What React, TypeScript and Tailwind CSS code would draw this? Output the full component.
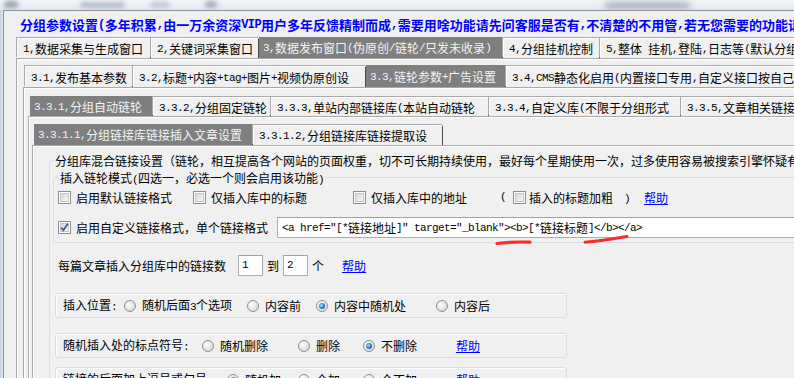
import React from "react";

const CJK_RE = /[\u2E80-\u9FFF\uF900-\uFAFF\uFF00-\uFFEF\u3000-\u303F]/;

function M({ t, b }: { t: string; b?: boolean }) {
  const runs: { s: string; c: boolean }[] = [];
  for (const ch of t) {
    const c = CJK_RE.test(ch);
    const last = runs[runs.length - 1];
    if (last && last.c === c) last.s += ch;
    else runs.push({ s: ch, c });
  }
  return (
    <>
      {runs.map((r, i) =>
        r.c ? (
          <span
            key={i}
            className={
              b
                ? "font-['Noto_Sans_CJK_SC',sans-serif] text-[13px] font-bold"
                : "font-['Noto_Sans_CJK_SC',sans-serif] text-[12px]"
            }
          >
            {r.s}
          </span>
        ) : (
          <span
            key={i}
            className={
              b
                ? "font-['Liberation_Mono',monospace] text-[12px] font-bold tracking-[-0.6px] whitespace-pre"
                : "font-['Liberation_Mono',monospace] text-[11px] tracking-[-0.6px] whitespace-pre"
            }
          >
            {r.s}
          </span>
        )
      )}
    </>
  );
}

function Check({ on }: { on?: boolean }) {
  return (
    <span className="relative flex w-[13px] h-[13px] shrink-0 items-center justify-center border border-[#8e8f8f] bg-white">
      <span className="w-[9px] h-[9px] border border-[#c4c6c9] bg-gradient-to-br from-[#d6d7d9] to-[#f7f7f7]" />
      {on && (
        <svg className="absolute left-0 top-0" width="11" height="11" viewBox="0 0 11 11">
          <path d="M2.2 5.4 L4.4 8.3 L8.8 1.8" fill="none" stroke="#3b5797" strokeWidth="1.7" />
        </svg>
      )}
    </span>
  );
}

function Radio({ on }: { on?: boolean }) {
  return (
    <span className="flex w-[12px] h-[12px] shrink-0 items-center justify-center rounded-full border border-[#8e8f8f] bg-[radial-gradient(circle_at_35%_35%,#ffffff,#cfcfcf)]">
      {on && (
        <span className="w-[6px] h-[6px] rounded-full bg-[radial-gradient(circle_at_40%_40%,#b6e6ff,#1d72c2_55%,#0b3c78)]" />
      )}
    </span>
  );
}

function Help() {
  return (
    <span className="text-[#0000ff] underline decoration-[#0000ff]">
      <M t="帮助" />
    </span>
  );
}

type TabDef = { t: string; w: string; sel?: boolean };

function TabRow({ tabs, h }: { tabs: TabDef[]; h: string }) {
  return (
    <div className={"flex items-end ml-[2px] " + h}>
      {tabs.map((tb, i) =>
        tb.sel ? (
          <div
            key={i}
            className={
              "flex items-center h-full pl-[4px] pt-[1px] bg-[#7f7f7f] text-[#f4f4f4] border-r border-r-[#404040] whitespace-nowrap overflow-hidden shrink-0 " +
              tb.w
            }
          >
            <M t={tb.t} />
          </div>
        ) : (
          <div
            key={i}
            className={
              "flex items-center h-[calc(100%-1px)] pl-[5px] pt-[1px] bg-[#f0f0f0] text-black border-t border-l border-white border-r border-r-[#4a4a4a] shadow-[-1px_-1px_0_#a9a9a9] whitespace-nowrap overflow-hidden shrink-0 " +
              tb.w
            }
          >
            <M t={tb.t} />
          </div>
        )
      )}
    </div>
  );
}

const row1: TabDef[] = [
  { t: "1,数据采集与生成窗口", w: "w-[134px]" },
  { t: "2,关键词采集窗口", w: "w-[108px]" },
  { t: "3,数据发布窗口(伪原创/链轮/只发未收录)", w: "w-[244px]", sel: true },
  { t: "4,分组挂机控制", w: "w-[97px]" },
  { t: "5,整体 挂机,登陆,日志等(默认分组挂机设置)", w: "w-[320px]" },
];
const row2: TabDef[] = [
  { t: "3.1,发布基本参数", w: "w-[108px]" },
  { t: "3.2,标题+内容+tag+图片+视频伪原创设", w: "w-[233px]" },
  { t: "3.3,链轮参数+广告设置", w: "w-[140px]", sel: true },
  { t: "3.4,CMS静态化启用(内置接口专用,自定义接口按自己实际情况)", w: "w-[420px]" },
];
const row3: TabDef[] = [
  { t: "3.3.1,分组自动链轮", w: "w-[123px]", sel: true },
  { t: "3.3.2,分组固定链轮", w: "w-[118px]" },
  { t: "3.3.3,单站内部链接库(本站自动链轮", w: "w-[218px]" },
  { t: "3.3.4,自定义库(不限于分组形式", w: "w-[192px]" },
  { t: "3.3.5,文章相关链接库设置", w: "w-[220px]" },
];
const row4: TabDef[] = [
  { t: "3.3.1.1,分组链接库链接插入文章设置", w: "w-[219px]", sel: true },
  { t: "3.3.1.2,分组链接库链接提取设", w: "w-[190px]" },
];

const panel = "border border-[#a9a9a9] shadow-[inset_1px_1px_0_#ffffff] bg-[#f0f0f0]";

export default function App() {
  return (
    <div className="relative w-[794px] h-[378px] overflow-hidden bg-[#f0f0f0] text-black leading-[14px]">
      {/* blurred title bar strip */}
      <div className="relative h-[10px] overflow-hidden bg-gradient-to-b from-[#f3f6fa] to-[#dfe7f0]">
        <div className="absolute left-[4px] top-[1px] w-[14px] h-[7px] rounded-full bg-[#9aa4b0] blur-[2px]" />
        <div className="absolute left-[80px] top-[2px] w-[45px] h-[6px] rounded-full bg-[#b3bcc7] blur-[2px]" />
        <div className="absolute left-[150px] top-[2px] w-[20px] h-[6px] rounded-full bg-[#c0c8d2] blur-[2px]" />
        <div className="absolute left-[205px] top-[1px] w-[12px] h-[7px] rounded-full bg-[#a6afba] blur-[2px]" />
        <div className="absolute left-[605px] top-[2px] w-[85px] h-[7px] rounded-full bg-[#a8b1bd] blur-[3px]" />
      </div>
      <div className="flex">
        <div className="w-[3px] h-[368px] shrink-0 bg-gradient-to-r from-[#c3d0df] to-[#e2e9f1]" />
        <div className="w-[1100px] shrink-0 h-[368px] border-l border-t border-[#8f949b] bg-[#f0f0f0]">
          {/* title */}
          <div className="h-[26px] pt-[2px] pl-[16px] flex items-center whitespace-nowrap text-[#0000ff]">
            <M
              b
              t="分组参数设置(多年积累,由一万余资深VIP用户多年反馈精制而成,需要用啥功能请先问客服是否有,不清楚的不用管,若无您需要的功能请先咨询客服定制)"
            />
          </div>

          {/* tab level 1 */}
          <div className="ml-[11px]">
            <TabRow tabs={row1} h="h-[21px]" />
          </div>
          <div className={"ml-[12px] pt-[6px] pl-[6px] " + panel}>
            <TabRow tabs={row2} h="h-[22px]" />
            <div className={"pt-[8px] pl-[4px] " + panel}>
              <TabRow tabs={row3} h="h-[20px]" />
              <div className={"pt-[7px] pl-[3px] " + panel}>
                <TabRow tabs={row4} h="h-[21px]" />
                <div className={"pt-[6px] pl-[16px] h-[300px] " + panel}>
                  <fieldset className="border border-[#d5dfe5] rounded-[3px] pl-[3px] pb-[10px]">
                    <legend className="ml-[1px] px-[1px] h-[16px] leading-[16px] whitespace-nowrap">
                      <M t="分组库混合链接设置（链轮，相互提高各个网站的页面权重，切不可长期持续使用，最好每个星期使用一次，过多使用容易被搜索引擎怀疑有作弊嫌疑）" />
                    </legend>

                    <fieldset className="mt-[1px] border border-[#d5dfe5] rounded-[3px] pl-[4px] pt-[2px] pb-[4px]">
                      <legend className="ml-[1px] px-[1px] h-[16px] leading-[16px] whitespace-nowrap">
                        <M t="插入链轮模式(四选一，必选一个则会启用该功能)" />
                      </legend>
                      <div className="flex items-center h-[20px] whitespace-nowrap">
                        <div className="flex items-center w-[135px] shrink-0">
                          <Check />
                          <span className="ml-[5px]">
                            <M t="启用默认链接格式" />
                          </span>
                        </div>
                        <div className="flex items-center w-[160px] shrink-0">
                          <Check />
                          <span className="ml-[5px]">
                            <M t="仅插入库中的标题" />
                          </span>
                        </div>
                        <div className="flex items-center w-[147px] shrink-0">
                          <Check />
                          <span className="ml-[5px]">
                            <M t="仅插入库中的地址" />
                          </span>
                        </div>
                        <M t="(" />
                        <span className="ml-[7px]">
                          <Check />
                        </span>
                        <span className="ml-[3px]">
                          <M t="插入的标题加粗" />
                        </span>
                        <span className="ml-[11px]">
                          <M t=")" />
                        </span>
                        <span className="ml-[14px]">
                          <Help />
                        </span>
                      </div>
                      <div className="flex items-center h-[21px] mt-[10px] whitespace-nowrap">
                        <Check on />
                        <span className="ml-[5px] w-[201px] shrink-0">
                          <M t="启用自定义链接格式，单个链接格式" />
                        </span>
                        <div className="flex items-center h-[21px] w-[700px] shrink-0 border border-[#abadb3] border-t-[#9ea1a8] bg-white pl-[4px]">
                          <M t={'<a href="[*链接地址]" target="_blank"><b>[*链接标题]</b></a>'} />
                        </div>
                      </div>
                    </fieldset>

                    <div className="flex items-center h-[20px] mt-[12px] ml-[5px] whitespace-nowrap">
                      <span className="w-[180px] shrink-0">
                        <M t="每篇文章插入分组库中的链接数" />
                      </span>
                      <div className="flex items-center w-[25px] h-[21px] border border-[#abadb3] border-t-[#9ea1a8] bg-white pl-[3px]">
                        <M t="1" />
                      </div>
                      <span className="ml-[4px]">
                        <M t="到" />
                      </span>
                      <div className="ml-[4px] flex items-center w-[25px] h-[21px] border border-[#abadb3] border-t-[#9ea1a8] bg-white pl-[3px]">
                        <M t="2" />
                      </div>
                      <span className="ml-[4px]">
                        <M t="个" />
                      </span>
                      <span className="ml-[18px]">
                        <Help />
                      </span>
                    </div>

                    <div className="mt-[18px] ml-[2px] flex items-center h-[25px] w-[512px] border border-[#d5dfe5] rounded-[3px] shadow-[inset_1px_1px_0_#ffffff] pl-[7px] whitespace-nowrap">
                      <span className="w-[61px] shrink-0">
                        <M t="插入位置:" />
                      </span>
                      <div className="flex items-center w-[123px] shrink-0">
                        <Radio />
                        <span className="ml-[6px]">
                          <M t="随机后面3个选项" />
                        </span>
                      </div>
                      <div className="flex items-center w-[69px] shrink-0">
                        <Radio />
                        <span className="ml-[6px]">
                          <M t="内容前" />
                        </span>
                      </div>
                      <div className="flex items-center w-[120px] shrink-0">
                        <Radio on />
                        <span className="ml-[6px]">
                          <M t="内容中随机处" />
                        </span>
                      </div>
                      <div className="flex items-center shrink-0">
                        <Radio />
                        <span className="ml-[6px]">
                          <M t="内容后" />
                        </span>
                      </div>
                    </div>

                    <div className="mt-[15px] ml-[2px] flex items-center h-[25px] w-[512px] border border-[#d5dfe5] rounded-[3px] shadow-[inset_1px_1px_0_#ffffff] pl-[7px] whitespace-nowrap">
                      <span className="w-[139px] shrink-0">
                        <M t="随机插入处的标点符号:" />
                      </span>
                      <div className="flex items-center w-[96px] shrink-0">
                        <Radio />
                        <span className="ml-[6px]">
                          <M t="随机删除" />
                        </span>
                      </div>
                      <div className="flex items-center w-[65px] shrink-0">
                        <Radio />
                        <span className="ml-[6px]">
                          <M t="删除" />
                        </span>
                      </div>
                      <div className="flex items-center w-[93px] shrink-0">
                        <Radio on />
                        <span className="ml-[6px]">
                          <M t="不删除" />
                        </span>
                      </div>
                      <Help />
                    </div>

                    <div className="mt-[9px] ml-[2px] flex items-center h-[25px] w-[512px] border border-[#d5dfe5] rounded-[3px] shadow-[inset_1px_1px_0_#ffffff] pl-[7px] whitespace-nowrap">
                      <span className="w-[164px] shrink-0">
                        <M t="链接的后面加上逗号或句号:" />
                      </span>
                      <div className="flex items-center w-[71px] shrink-0">
                        <Radio on />
                        <span className="ml-[6px]">
                          <M t="随机加" />
                        </span>
                      </div>
                      <div className="flex items-center w-[65px] shrink-0">
                        <Radio />
                        <span className="ml-[6px]">
                          <M t="全加" />
                        </span>
                      </div>
                      <div className="flex items-center w-[93px] shrink-0">
                        <Radio />
                        <span className="ml-[6px]">
                          <M t="全不加" />
                        </span>
                      </div>
                      <Help />
                    </div>
                  </fieldset>
                </div>
              </div>
            </div>
          </div>
        </div>
      </div>

      {/* hand-drawn red underline marks */}
      <svg className="absolute left-[494px] top-[238px]" width="40" height="9" viewBox="0 0 40 9">
        <path d="M3 5.5 Q 18 3.5 36 4.2" fill="none" stroke="#ff2b2b" strokeWidth="3.2" strokeLinecap="round" />
      </svg>
      <svg className="absolute left-[582px] top-[233px]" width="50" height="12" viewBox="0 0 50 12">
        <path d="M3 9.2 Q 22 7.5 45 3.5" fill="none" stroke="#ff2b2b" strokeWidth="3" strokeLinecap="round" />
      </svg>
    </div>
  );
}
